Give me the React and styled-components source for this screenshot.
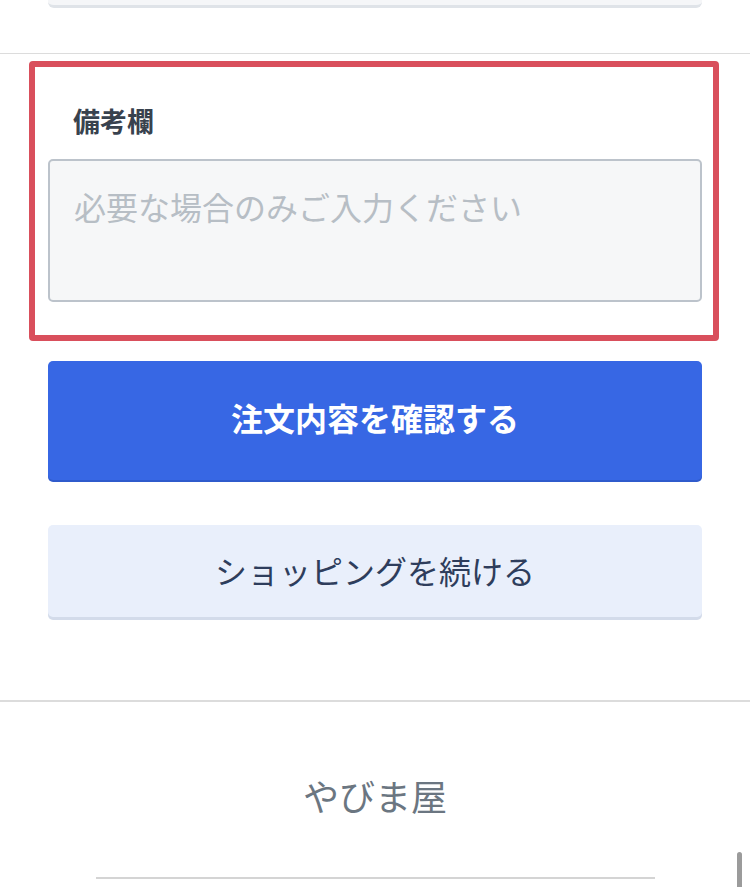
import styled, { createGlobalStyle } from "styled-components";

const GlobalStyle = createGlobalStyle`
  html, body {
    margin: 0;
    padding: 0;
    background: #ffffff;
    overflow: hidden;
  }
  body {
    font-family: "Noto Sans CJK JP", "Noto Sans", sans-serif;
  }
`;

const Page = styled.div`
  width: 750px;
  height: 887px;
  position: relative;
  overflow: hidden;
`;

const TopSection = styled.div`
  padding-bottom: 45px;
  border-bottom: 1px solid #dcdcdc;
`;

const CardStub = styled.div`
  margin-left: 48px;
  width: 654px;
  height: 5px;
  background: #f5f6f8;
  border-bottom: 3px solid #dfe3e8;
  border-radius: 0 0 6px 6px;
`;

const Highlight = styled.div`
  margin: 7px 0 0 29px;
  width: 690px;
  box-sizing: border-box;
  border: 6px solid #d94f5c;
  border-radius: 4px;
  padding: 36px 10px 33px 13px;
`;

const Label = styled.div`
  font-size: 27px;
  line-height: 36px;
  font-weight: 700;
  color: #38424e;
  padding-left: 25px;
`;

const Note = styled.textarea`
  display: block;
  margin-top: 20px;
  width: 654px;
  height: 143px;
  box-sizing: border-box;
  padding: 24px 24px;
  border: 2px solid #bcc3cb;
  border-radius: 5px;
  background: #f6f7f8;
  font-family: inherit;
  font-size: 32px;
  line-height: 43px;
  color: #333;
  resize: none;
  outline: none;

  &::placeholder {
    color: #b7bec5;
  }
`;

const Actions = styled.div`
  display: flex;
  flex-direction: column;
  gap: 45px;
  padding: 20px 48px 83px;
  border-bottom: 2px solid #dcdcdc;
`;

const Button = styled.button`
  width: 654px;
  height: ${(p) => (p.primary ? "119px" : "92px")};
  padding: 0 0 ${(p) => (p.primary ? "7px" : "3px")};
  border: none;
  border-radius: 5px;
  font-family: inherit;
  font-size: 32px;
  font-weight: ${(p) => (p.primary ? 700 : 400)};
  color: ${(p) => (p.primary ? "#ffffff" : "#2e3d5c")};
  background: ${(p) => (p.primary ? "#3767e4" : "#e9effb")};
  box-shadow: ${(p) => (p.primary ? "0 2px 0 #2f5bcc" : "0 3px 0 #d3dbea")};
  cursor: pointer;
`;

const Footer = styled.div`
  display: flex;
  flex-direction: column;
  align-items: center;
  padding-top: 69px;
`;

const Shop = styled.div`
  font-size: 36px;
  line-height: 49px;
  color: #6b7681;
`;

const FooterLine = styled.div`
  margin-top: 57px;
  width: 559px;
  height: 2px;
  background: #d4d4d4;
`;

const ScrollThumb = styled.div`
  position: absolute;
  right: 8px;
  bottom: 0;
  width: 5px;
  height: 35px;
  border-radius: 3px 3px 0 0;
  background: #9b9b9b;
`;

export default function App() {
  return (
    <Page>
      <GlobalStyle />
      <TopSection>
        <CardStub />
      </TopSection>

      <Highlight>
        <Label>備考欄</Label>
        <Note placeholder="必要な場合のみご入力ください" />
      </Highlight>

      <Actions>
        <Button primary>注文内容を確認する</Button>
        <Button>ショッピングを続ける</Button>
      </Actions>

      <Footer>
        <Shop>やびま屋</Shop>
        <FooterLine />
      </Footer>

      <ScrollThumb />
    </Page>
  );
}
